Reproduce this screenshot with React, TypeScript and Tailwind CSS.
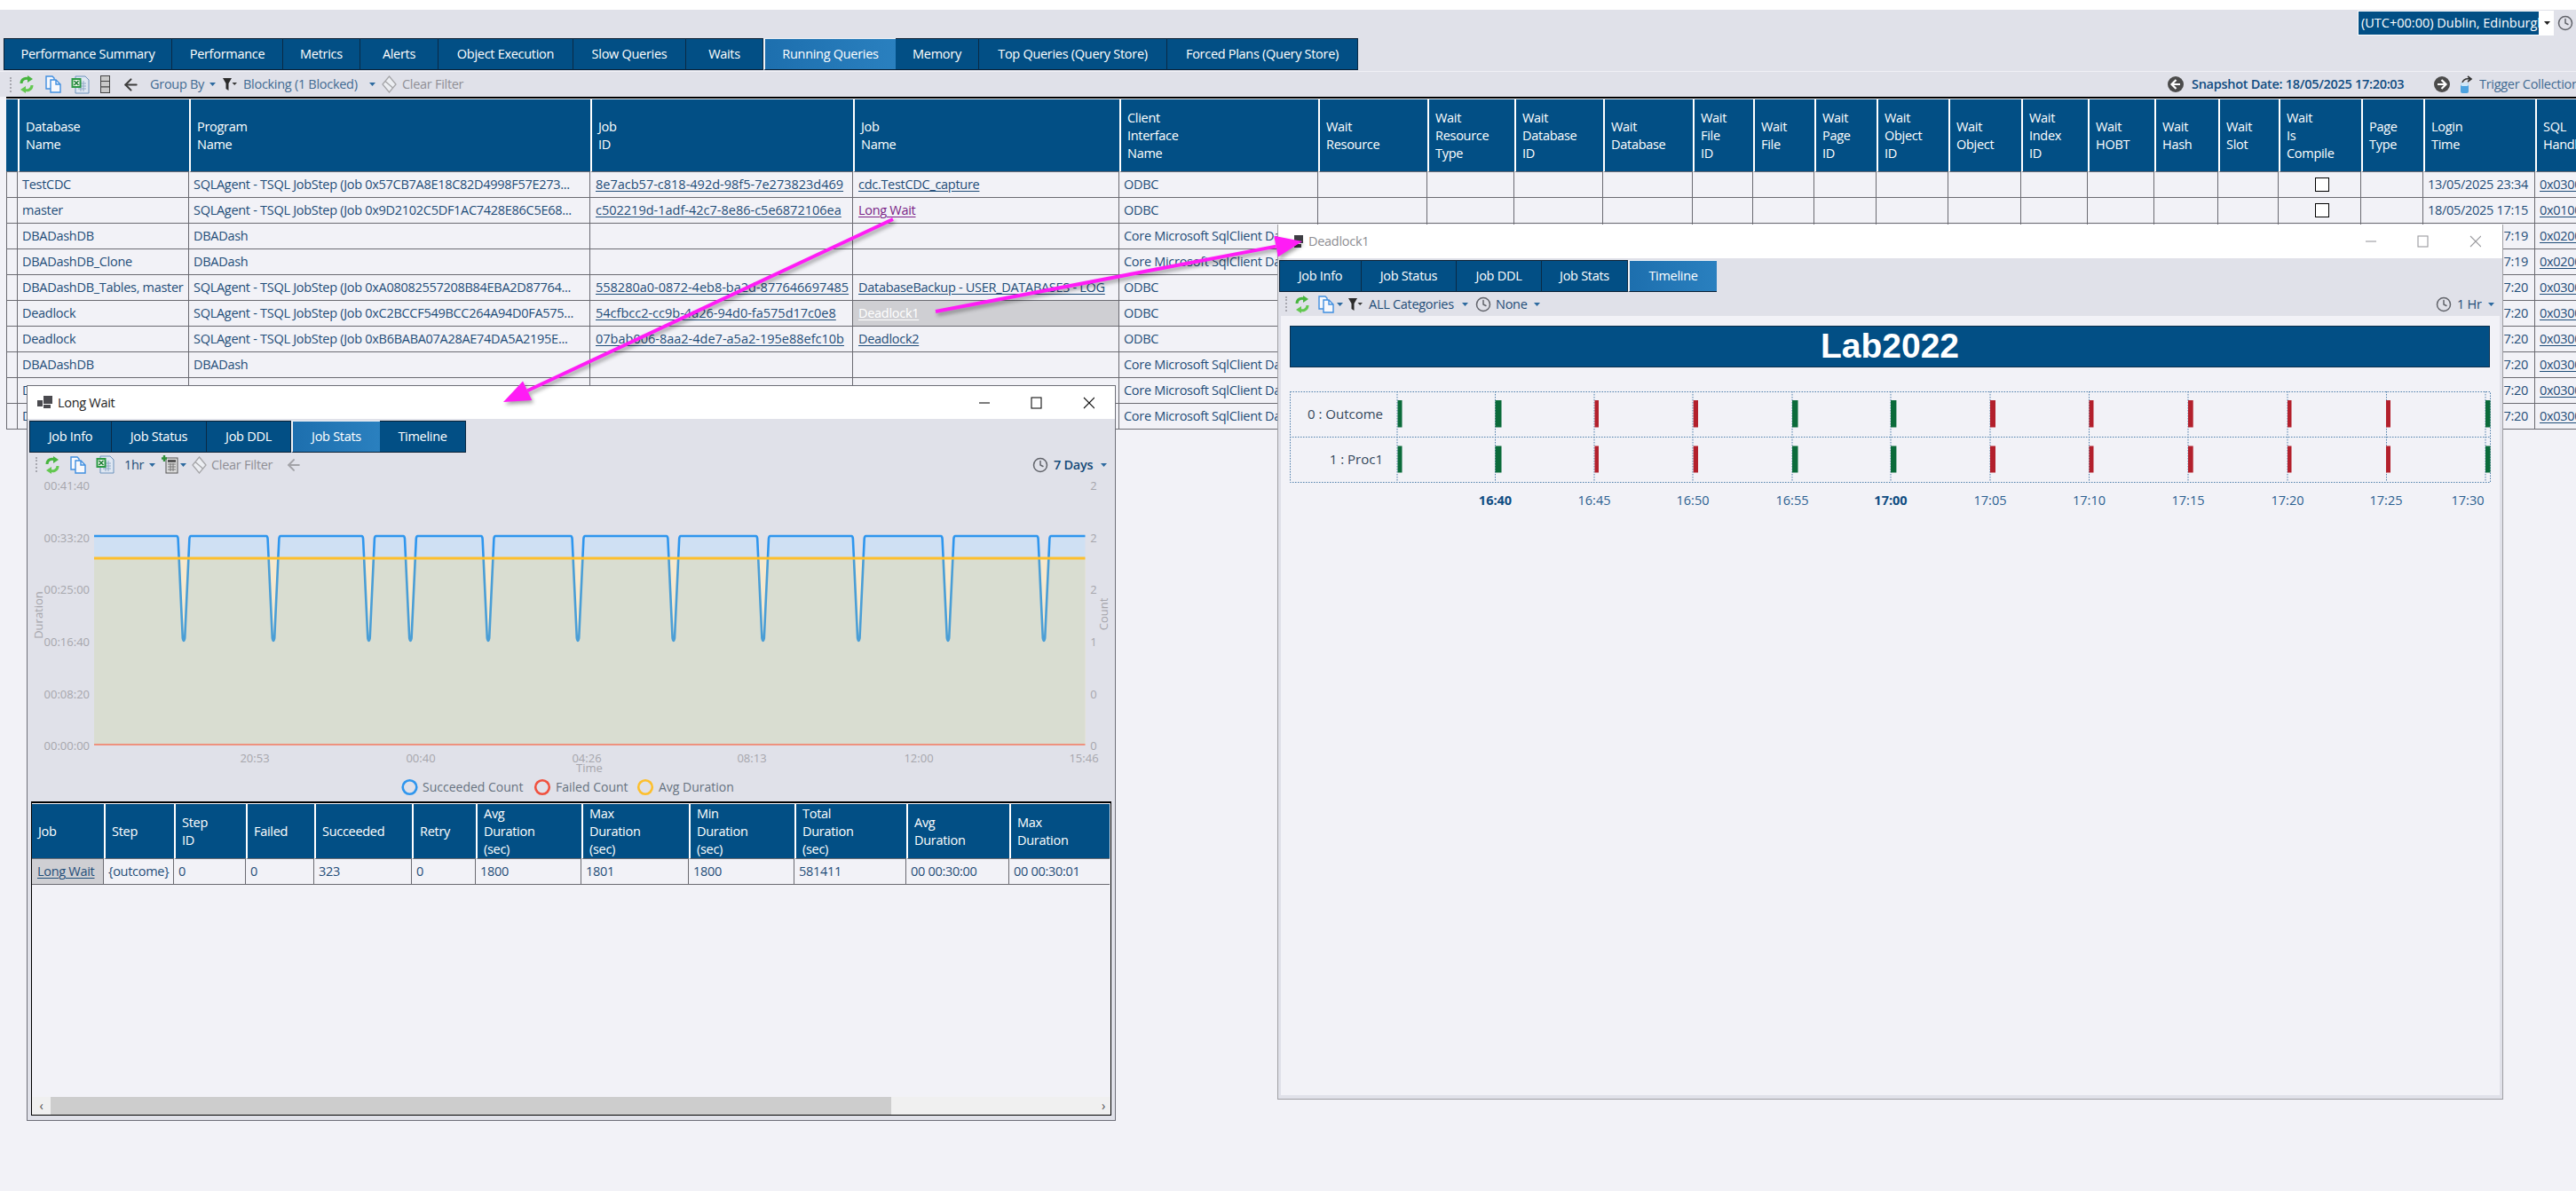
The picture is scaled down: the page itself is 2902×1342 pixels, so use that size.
import React from "react";
import { ArrowLeft, Clock } from "lucide-react";

const NAVY = "bg-[#024f85]";

// ---------- small drawn icons ----------
function Grip() {
  return <div className="h-[17px] w-[2px] border-l-2 border-dotted border-[#a8a8b0]" />;
}

function Refresh() {
  return (
    <svg width="16" height="20" viewBox="0 0 16 20" fill="none">
      <path d="M2 9 C2 4 7 2 11 4" stroke="#47b53f" strokeWidth="3" />
      <path d="M9 0 L15 4 L9 8 Z" fill="#47b53f" />
      <path d="M14 11 C14 16 9 18 5 16" stroke="#63c850" strokeWidth="3" />
      <path d="M7 12 L1 16 L7 20 Z" fill="#63c850" />
    </svg>
  );
}

function CopyIcon() {
  return (
    <svg width="18" height="20" viewBox="0 0 18 20" fill="#f7f8fc" stroke="#3f8ee0" strokeWidth="1.4">
      <path d="M1 1 H8 L10 3 V15 H1 Z" />
      <path d="M6 5 H12 L17 10 V19 H6 Z" />
      <path d="M12 5 V10 H17" fill="none" />
    </svg>
  );
}

function ExcelIcon() {
  return (
    <svg width="21" height="21" viewBox="0 0 21 21">
      <path d="M5 1 H16 L20 5 V20 H5 Z" fill="#dfe7f2" stroke="#6d93bd" />
      <path d="M8 9 H17 M8 12 H17 M8 15 H17 M11 6 V18 M14 6 V18" stroke="#8fa9c6" />
      <rect x="0.5" y="3" width="11" height="11" fill="#2d9a46" />
      <rect x="2.5" y="5" width="7" height="7" fill="#eaf6ea" />
      <path d="M3.5 6 L8.5 11 M8.5 6 L3.5 11" stroke="#1c7c34" strokeWidth="1.5" />
    </svg>
  );
}

function ColumnsIcon() {
  return (
    <svg width="11" height="20" viewBox="0 0 11 20" fill="#c9c9c9" stroke="#444">
      <rect x="0.5" y="0.5" width="10" height="6" />
      <rect x="0.5" y="6.5" width="10" height="6.5" />
      <rect x="0.5" y="13" width="10" height="6.5" />
    </svg>
  );
}

function Funnel() {
  return (
    <svg width="16" height="16" viewBox="0 0 16 16">
      <path d="M0 1 H10 L6.5 7 V15 L3.5 13 V7 Z" fill="#2b2b2b" />
      <path d="M10.5 6 H16 L13.2 9 Z" fill="#3a3a3a" />
    </svg>
  );
}

function Eraser() {
  return (
    <svg width="17" height="20" viewBox="0 0 17 20" fill="#eceef2" stroke="#a5a5a8" strokeWidth="1.3">
      <path d="M8.5 1 L16 10 L8.5 19 L1 10 Z" />
      <path d="M4 6.5 L12.5 14" fill="none" />
    </svg>
  );
}

function Calc() {
  return (
    <svg width="19" height="21" viewBox="0 0 19 21">
      <rect x="5" y="3" width="13" height="17" fill="#dcdcdc" stroke="#555" />
      <rect x="7" y="5" width="9" height="3" fill="#555" />
      <path d="M7 10 H16 M7 13 H16 M7 16 H16 M10 9 V18 M13 9 V18" stroke="#777" />
      <path d="M3 0 V7 M0 3.5 H6" stroke="#2f8f3a" strokeWidth="2.4" />
    </svg>
  );
}

function Caret({ dark }: { dark?: boolean }) {
  return (
    <svg width="7" height="4" viewBox="0 0 7 4">
      <path d="M0 0 H7 L3.5 4 Z" fill={dark ? "#222" : "#2d6aa0"} />
    </svg>
  );
}

function Round({ dir }: { dir: "l" | "r" }) {
  return (
    <svg width="18" height="18" viewBox="0 0 18 18">
      <circle cx="9" cy="9" r="9" fill="#4b4b4b" />
      <path
        d={dir === "l" ? "M9.5 4 L4.5 9 L9.5 14 M5 9 H14" : "M8.5 4 L13.5 9 L8.5 14 M13 9 H4"}
        stroke="#fff"
        strokeWidth="2.2"
        fill="none"
      />
    </svg>
  );
}

function TriggerIcon() {
  return (
    <svg width="17" height="21" viewBox="0 0 17 21">
      <path d="M11 1 L15 4 L11 7 M14 4 C9 3 6 5 5 8" stroke="#333" strokeWidth="1.6" fill="none" />
      <rect x="3" y="8" width="9" height="12" rx="2" fill="#4da3e0" />
      <rect x="3" y="8" width="9" height="4" rx="2" fill="#cfe6f7" />
    </svg>
  );
}

function WinIcon({ grey }: { grey?: boolean }) {
  const c = grey ? "#3d3d42" : "#4a4a4f";
  return (
    <svg width="17" height="15" viewBox="0 0 17 15" fill={c}>
      <rect x="7" y="0" width="10" height="9" />
      <rect x="0" y="5" width="6" height="7" />
      <rect x="7" y="10" width="8" height="4" />
    </svg>
  );
}

function WinControls({ grey }: { grey?: boolean }) {
  const c = grey ? "#9a9a9e" : "#111";
  return (
    <svg width="130" height="16" viewBox="0 0 130 16" fill="none" stroke={c} strokeWidth="1.1">
      <path d="M0 8 H12" />
      <rect x="59" y="2" width="11" height="12" />
      <path d="M118 2 L130 14 M130 2 L118 14" />
    </svg>
  );
}

// ---------- tabs ----------
type Tab = { label: string; w: string; gap?: boolean; active?: boolean };

function TabStrip({ tabs }: { tabs: Tab[] }) {
  return (
    <div className="flex h-[36px] items-stretch text-white">
      {tabs.map((t, i) => (
        <div
          key={t.label}
          className={`flex items-center justify-center whitespace-nowrap border-y border-[#0a1f33] ${t.w} ${
            t.active
              ? "bg-gradient-to-r from-[#1d6fae] to-[#2a80bf] border-t-[#e8edf3] border-l-2 border-l-[#f0f2f6]"
              : `${NAVY} ${i === 0 ? "border-l border-l-[#0a1f33]" : ""} border-r border-r-[#0a2a45]`
          }`}
        >
          {t.label}
        </div>
      ))}
    </div>
  );
}

// ---------- data grid bits ----------
function Head({ lines, first }: { lines: string[]; first?: boolean }) {
  return (
    <div
      className={`flex min-w-0 flex-col justify-center border-b border-[#6b6b72] pl-[7px] leading-[20px] text-white ${NAVY} ${
        first ? "" : "border-l-2 border-l-white"
      }`}
    >
      {lines.map((l) => (
        <span key={l} className="whitespace-nowrap">
          {l}
        </span>
      ))}
    </div>
  );
}

function Cell({ children, className = "" }: { children?: React.ReactNode; className?: string }) {
  return (
    <div
      className={`flex h-[29px] min-w-0 items-center overflow-hidden whitespace-nowrap border-b border-r border-[#6b6b72] pl-[5px] text-[#1f4d78] ${className}`}
    >
      {children}
    </div>
  );
}

function Link({ children, className = "" }: { children: React.ReactNode; className?: string }) {
  return <span className={`underline underline-offset-2 ${className}`}>{children}</span>;
}

const MAIN_COLS =
  "grid-cols-[13px_193px_452px_296px_300px_224px_123px_98px_100px_101px_68px_69px_70px_81px_82px_75px_75px_72px_68px_93px_70px_126px_144px]";

const MAIN_HEAD: string[][] = [
  [],
  ["Database", "Name"],
  ["Program", "Name"],
  ["Job", "ID"],
  ["Job", "Name"],
  ["Client", "Interface", "Name"],
  ["Wait", "Resource"],
  ["Wait", "Resource", "Type"],
  ["Wait", "Database", "ID"],
  ["Wait", "Database"],
  ["Wait", "File", "ID"],
  ["Wait", "File"],
  ["Wait", "Page", "ID"],
  ["Wait", "Object", "ID"],
  ["Wait", "Object"],
  ["Wait", "Index", "ID"],
  ["Wait", "HOBT"],
  ["Wait", "Hash"],
  ["Wait", "Slot"],
  ["Wait", "Is", "Compile"],
  ["Page", "Type"],
  ["Login", "Time"],
  ["SQL", "Handle"],
];

const CORE = "Core Microsoft SqlClient Data Provider";
const AGENT = "SQLAgent - TSQL JobStep (Job ";

const MAIN_ROWS = [
  { db: "TestCDC", prog: AGENT + "0x57CB7A8E18C82D4998F57E273...", id: "8e7acb57-c818-492d-98f5-7e273823d469", job: "cdc.TestCDC_capture", client: "ODBC", login: "13/05/2025 23:34", sql: "0x030000" },
  { db: "master", prog: AGENT + "0x9D2102C5DF1AC7428E86C5E68...", id: "c502219d-1adf-42c7-8e86-c5e6872106ea", job: "Long Wait", client: "ODBC", login: "18/05/2025 17:15", sql: "0x010000" },
  { db: "DBADashDB", prog: "DBADash", id: "", job: "", client: CORE, login: "18/05/2025 17:19", sql: "0x020000" },
  { db: "DBADashDB_Clone", prog: "DBADash", id: "", job: "", client: CORE, login: "18/05/2025 17:19", sql: "0x020000" },
  { db: "DBADashDB_Tables, master", prog: AGENT + "0xA08082557208B84EBA2D87764...", id: "558280a0-0872-4eb8-ba2d-877646697485", job: "DatabaseBackup - USER_DATABASES - LOG", client: "ODBC", login: "18/05/2025 17:20", sql: "0x030000" },
  { db: "Deadlock", prog: AGENT + "0xC2BCCF549BCC264A94D0FA575...", id: "54cfbcc2-cc9b-4a26-94d0-fa575d17c0e8", job: "Deadlock1", client: "ODBC", login: "18/05/2025 17:20", sql: "0x030000" },
  { db: "Deadlock", prog: AGENT + "0xB6BABA07A28AE74DA5A2195E...", id: "07bab006-8aa2-4de7-a5a2-195e88efc10b", job: "Deadlock2", client: "ODBC", login: "18/05/2025 17:20", sql: "0x030000" },
  { db: "DBADashDB", prog: "DBADash", id: "", job: "", client: CORE, login: "18/05/2025 17:20", sql: "0x030000" },
  { db: "DBADashDB", prog: "DBADash", id: "", job: "", client: CORE, login: "18/05/2025 17:20", sql: "0x030000" },
  { db: "DBADashDB", prog: "DBADash", id: "", job: "", client: CORE, login: "18/05/2025 17:20", sql: "0x030000" },
];

function MainGrid() {
  return (
    <div className={`ml-[7px] grid h-[372px] w-[3000px] ${MAIN_COLS} grid-rows-[82px_repeat(10,29px)]`}>
      {MAIN_HEAD.map((lines, i) => (
        <Head key={i} lines={lines} first={i === 0} />
      ))}
      {MAIN_ROWS.map((r, idx) => (
        <React.Fragment key={idx}>
          <Cell className="border-l border-l-[#6b6b72]" />
          <Cell>{r.db}</Cell>
          <Cell>{r.prog}</Cell>
          <Cell className="pl-[6px] tracking-normal">{r.id && <Link>{r.id}</Link>}</Cell>
          <Cell
            className={`pl-[6px] ${r.job === "Deadlock1" ? "bg-[#cfcfd3]" : ""}`}
          >
            {r.job && (
              <Link
                className={
                  r.job === "Long Wait" ? "text-[#7a1f86]" : r.job === "Deadlock1" ? "text-white" : ""
                }
              >
                {r.job}
              </Link>
            )}
          </Cell>
          <Cell>{r.client}</Cell>
          {Array.from({ length: 13 }).map((_, i) => (
            <Cell key={i} />
          ))}
          <Cell className="justify-center pl-0">
            <div className="h-[16px] w-[16px] border-[1.5px] border-black bg-white" />
          </Cell>
          <Cell />
          <Cell className="pl-[4px]">{r.login}</Cell>
          <Cell className="pl-[5px]">
            <Link>{r.sql}</Link>
          </Cell>
        </React.Fragment>
      ))}
    </div>
  );
}

// ---------- job stats chart ----------
const DIPS = [207, 308, 415.5, 462.4, 550, 651, 758.8, 859.6, 967.3, 1068, 1176];
const PLOT_L = 106;
const PLOT_R = 1222.5;

function durationPath() {
  let d = `M${PLOT_L} 604`;
  DIPS.forEach((x) => {
    d += ` L${x - 8} 604 Q${x - 6.8} 604 ${x - 6.4} 607 L${x - 1.2} 719 Q${x} 725 ${x + 1.2} 719 L${x + 6.4} 607 Q${x + 6.8} 604 ${x + 8} 604`;
  });
  return d + ` L${PLOT_R} 604`;
}

function StatsChart() {
  const line = durationPath();
  const area = `${line} L${PLOT_R} 839 L${PLOT_L} 839 Z`;
  const yLabels: [string, string, number][] = [
    ["00:41:40", "2", 547],
    ["00:33:20", "2", 606],
    ["00:25:00", "2", 664],
    ["00:16:40", "1", 723],
    ["00:08:20", "0", 782],
    ["00:00:00", "0", 840],
  ];
  const xLabels: [string, number][] = [
    ["20:53", 287],
    ["00:40", 474],
    ["04:26", 661],
    ["08:13", 847],
    ["12:00", 1035],
    ["15:46", 1221],
  ];
  return (
    <svg width="1216" height="366" viewBox="35 537 1216 366" className="shrink-0 tracking-normal">
      <defs>
        <clipPath id="above">
          <rect x="100" y="590" width="1130" height="39" />
        </clipPath>
        <clipPath id="below">
          <rect x="100" y="629" width="1130" height="211" />
        </clipPath>
      </defs>
      <rect x={PLOT_L} y="629" width={PLOT_R - PLOT_L} height="210" fill="#f6e9cf" />
      <path d={area} fill="#cfe0f3" clipPath="url(#above)" />
      <path d={area} fill="#d9ddd1" clipPath="url(#below)" />
      <path d={line} fill="none" stroke="#2f96ee" strokeWidth="2.6" clipPath="url(#above)" />
      <path d={line} fill="none" stroke="#4a9ed6" strokeWidth="2.6" clipPath="url(#below)" />
      <path d={`M${PLOT_L} 629 H${PLOT_R}`} stroke="#fdbf2d" strokeWidth="3" />
      <path d={`M${PLOT_L} 839 H${PLOT_R}`} stroke="#f4775f" strokeWidth="1.4" />
      <g fill="#a6a6ac" fontSize="13">
        {yLabels.map(([l, r, y]) => (
          <React.Fragment key={l}>
            <text x="101" y={y + 5} textAnchor="end">
              {l}
            </text>
            <text x="1232" y={y + 5} textAnchor="middle">
              {r}
            </text>
          </React.Fragment>
        ))}
        {xLabels.map(([l, x]) => (
          <text key={l} x={x} y="859" textAnchor="middle">
            {l}
          </text>
        ))}
        <text x="664" y="870" textAnchor="middle">
          Time
        </text>
        <text transform="rotate(-90 48 693)" x="48" y="693" textAnchor="middle">
          Duration
        </text>
        <text transform="rotate(-90 1248 692)" x="1248" y="692" textAnchor="middle">
          Count
        </text>
      </g>
      <g fill="none" strokeWidth="2.6">
        <circle cx="461.5" cy="887" r="7.8" stroke="#2f96ee" />
        <circle cx="611" cy="887" r="7.8" stroke="#f0513f" />
        <circle cx="727" cy="887" r="7.8" stroke="#fdbf2d" />
      </g>
      <g fill="#66727f" fontSize="14">
        <text x="476" y="892">Succeeded Count</text>
        <text x="626" y="892">Failed Count</text>
        <text x="742" y="892">Avg Duration</text>
      </g>
    </svg>
  );
}

const STATS_COLS = "grid-cols-[81px_79px_81px_77px_110px_72px_119px_121px_119px_126px_116px_113px]";
const STATS_HEAD: string[][] = [
  ["Job"],
  ["Step"],
  ["Step", "ID"],
  ["Failed"],
  ["Succeeded"],
  ["Retry"],
  ["Avg", "Duration", "(sec)"],
  ["Max", "Duration", "(sec)"],
  ["Min", "Duration", "(sec)"],
  ["Total", "Duration", "(sec)"],
  ["Avg", "Duration"],
  ["Max", "Duration"],
];
const STATS_ROW = ["{outcome}", "0", "0", "323", "0", "1800", "1801", "1800", "581411", "00 00:30:00", "00 00:30:01"];

function LongWaitWindow() {
  return (
    <div className="absolute left-[30px] top-[434px] z-10 flex h-[829px] w-[1227px] flex-col border border-[#6f7079] bg-[#e0e1e9]">
      <div className="flex h-[37px] shrink-0 items-center bg-white pl-[11px] text-[#222]">
        <WinIcon />
        <span className="ml-[6px] w-[80px] whitespace-nowrap">Long Wait</span>
        <div className="ml-auto mr-[23px]">
          <WinControls />
        </div>
      </div>
      <div className="ml-[2px] mt-[2px] shrink-0">
        <TabStrip
          tabs={[
            { label: "Job Info", w: "w-[93px]" },
            { label: "Job Status", w: "w-[107px]" },
            { label: "Job DDL", w: "w-[95px]" },
            { label: "Job Stats", w: "w-[100px]", active: true },
            { label: "Timeline", w: "w-[97px]" },
          ]}
        />
      </div>
      <div className="flex h-[27px] shrink-0 items-center text-[#1f4d78]">
        <div className="ml-[9px]">
          <Grip />
        </div>
        <div className="ml-[9px]">
          <Refresh />
        </div>
        <div className="ml-[12px]">
          <CopyIcon />
        </div>
        <div className="ml-[11px]">
          <ExcelIcon />
        </div>
        <span className="ml-[11px] w-[22px]">1hr</span>
        <div className="ml-[6px]">
          <Caret />
        </div>
        <div className="ml-[7px]">
          <Calc />
        </div>
        <div className="ml-[2px]">
          <Caret />
        </div>
        <div className="ml-[6px]">
          <Eraser />
        </div>
        <span className="ml-[5px] w-[72px] whitespace-nowrap text-[#8f8f96]">Clear Filter</span>
        <div className="ml-[11px] text-[#a3a3a8]">
          <ArrowLeft size={20} strokeWidth={2.4} />
        </div>
        <div className="ml-auto text-[#62646b]">
          <Clock size={18} strokeWidth={2} />
        </div>
        <span className="ml-[6px] w-[48px] whitespace-nowrap font-semibold text-[#144a78]">7 Days</span>
        <div className="ml-[5px] mr-[9px]">
          <Caret />
        </div>
      </div>
      <div className="flex min-h-0 flex-1 flex-col pb-[5px] pl-[4px] pr-[4px]">
        <StatsChart />
        <div className="flex min-h-0 flex-1 flex-col border-x border-b border-t-2 border-black bg-[#f2f2f7] pt-[1px]">
          <div className={`grid ${STATS_COLS} grid-rows-[62px_29px]`}>
            {STATS_HEAD.map((lines, i) => (
              <Head key={i} lines={lines} first={i === 0} />
            ))}
            <Cell className="bg-[#cfcfd3] pl-[6px]">
              <Link>Long Wait</Link>
            </Cell>
            {STATS_ROW.map((v, i) => (
              <Cell key={i} className={i === STATS_ROW.length - 1 ? "border-r-0" : ""}>
                {v}
              </Cell>
            ))}
          </div>
          <div className="mt-auto flex h-[20px] items-center bg-[#f0f0f0]">
            <div className="flex h-full w-[21px] items-center justify-center text-[#555]">‹</div>
            <div className="h-full w-[947px] bg-[#cdcdcd]" />
            <div className="ml-auto mr-[6px] text-[#555]">›</div>
          </div>
        </div>
      </div>
    </div>
  );
}

// ---------- deadlock timeline ----------
const GRID_X = [1574, 1684.5, 1796, 1907, 2019, 2130, 2242, 2353.5, 2465, 2577, 2688.5, 2800];
const BARS: [number, number, string][] = [
  [1574.5, 5, "#0b6b3a"],
  [1684.5, 7, "#0b6b3a"],
  [1796.5, 4.5, "#b3202c"],
  [1907.7, 5.3, "#b3202c"],
  [2019, 6.5, "#0b6b3a"],
  [2130, 6.4, "#0b6b3a"],
  [2242, 6, "#b3202c"],
  [2353.5, 5, "#b3202c"],
  [2465, 5.7, "#b3202c"],
  [2577, 4.5, "#b3202c"],
  [2688, 5, "#b3202c"],
  [2800, 5.5, "#0b6b3a"],
];
const TIME_LABELS: [string, number, boolean][] = [
  ["16:40", 1684.5, true],
  ["16:45", 1796, false],
  ["16:50", 1907, false],
  ["16:55", 2019, false],
  ["17:00", 2130, true],
  ["17:05", 2242, false],
  ["17:10", 2353.5, false],
  ["17:15", 2465, false],
  ["17:20", 2577, false],
  ["17:25", 2688, false],
  ["17:30", 2780, false],
];

function Timeline() {
  return (
    <svg width="1354" height="140" viewBox="1453 436 1354 140" className="mt-[22px] shrink-0 tracking-normal">
      <g stroke="#4f7fab" strokeWidth="1" strokeDasharray="1.5 1.5" fill="none">
        <rect x="1453.5" y="441.5" width="1352" height="102" />
        <path d="M1453 492.5 H2806" />
        {GRID_X.map((x) => (
          <path key={x} d={`M${x} 441 V543`} />
        ))}
      </g>
      {BARS.map(([x, w, c]) => (
        <React.Fragment key={x}>
          <rect x={x} y="451" width={w} height="30.5" fill={c} />
          <rect x={x} y="502.5" width={w} height="30" fill={c} />
        </React.Fragment>
      ))}
      <text x="1558" y="472" textAnchor="end" fill="#33475b" fontSize="15">
        0 : Outcome
      </text>
      <text x="1558" y="523" textAnchor="end" fill="#33475b" fontSize="15">
        1 : Proc1
      </text>
      {TIME_LABELS.map(([l, x, bold]) => (
        <text
          key={l}
          x={x}
          y="569"
          textAnchor="middle"
          fontSize="14.5"
          fontWeight={bold ? 700 : 400}
          fill={bold ? "#0f4c81" : "#2a5f90"}
        >
          {l}
        </text>
      ))}
    </svg>
  );
}

function DeadlockWindow() {
  return (
    <div className="absolute left-[1439px] top-[253px] z-10 flex h-[986px] w-[1381px] flex-col border-x border-b border-[#a0a0a4] bg-[#e0e1e9]">
      <div className="flex h-[38px] shrink-0 items-center bg-white pl-[11px] text-[#8d8d92]">
        <WinIcon grey />
        <span className="ml-[6px]">Deadlock1</span>
        <div className="ml-auto mr-[24px]">
          <WinControls grey />
        </div>
      </div>
      <div className="ml-[1px] mt-[2px] shrink-0">
        <TabStrip
          tabs={[
            { label: "Job Info", w: "w-[93px]" },
            { label: "Job Status", w: "w-[107px]" },
            { label: "Job DDL", w: "w-[96px]" },
            { label: "Job Stats", w: "w-[97px]" },
            { label: "Timeline", w: "w-[100px]", active: true },
          ]}
        />
      </div>
      <div className="flex h-[27px] shrink-0 items-center text-[#1f4d78]">
        <div className="ml-[8px]">
          <Grip />
        </div>
        <div className="ml-[9px]">
          <Refresh />
        </div>
        <div className="ml-[10px]">
          <CopyIcon />
        </div>
        <div className="ml-[3px]">
          <Caret />
        </div>
        <div className="ml-[6px]">
          <Funnel />
        </div>
        <span className="ml-[7px] w-[98px] whitespace-nowrap">ALL Categories</span>
        <div className="ml-[7px]">
          <Caret />
        </div>
        <div className="ml-[8px] text-[#62646b]">
          <Clock size={18} strokeWidth={2} />
        </div>
        <span className="ml-[5px] w-[36px]">None</span>
        <div className="ml-[7px]">
          <Caret />
        </div>
        <div className="ml-auto text-[#62646b]">
          <Clock size={18} strokeWidth={2} />
        </div>
        <span className="ml-[6px] w-[28px] whitespace-nowrap">1 Hr</span>
        <div className="ml-[7px] mr-[9px]">
          <Caret />
        </div>
      </div>
      <div className="ml-[3px] mr-[3px] flex flex-1 flex-col bg-[#f2f2f7] pl-[10px] pb-[4px]">
        <div
          className={`mt-[11px] flex h-[47px] w-[1352px] shrink-0 items-center justify-center border border-[#0b2f4d] font-['Liberation_Sans',sans-serif] text-[39px] font-bold tracking-normal text-white ${NAVY}`}
        >
          Lab2022
        </div>
        <Timeline />
      </div>
      <div className="h-[4px] shrink-0" />
    </div>
  );
}

// ---------- magenta annotation arrows ----------
function arrowPoints(x1: number, y1: number, x2: number, y2: number) {
  const len = Math.hypot(x2 - x1, y2 - y1);
  const ux = (x2 - x1) / len;
  const uy = (y2 - y1) / len;
  const bx = x2 - ux * 30;
  const by = y2 - uy * 30;
  const nx = -uy;
  const ny = ux;
  return {
    line: `M${x1} ${y1} L${bx} ${by}`,
    head: `${x2},${y2} ${bx + nx * 12},${by + ny * 12} ${bx - nx * 12},${by - ny * 12}`,
  };
}

function Arrows() {
  const a = arrowPoints(1006, 247, 567, 453);
  const b = arrowPoints(1054, 351, 1467, 272);
  return (
    <svg
      width="2902"
      height="1342"
      viewBox="0 0 2902 1342"
      className="pointer-events-none absolute left-0 top-0 z-20 [filter:drop-shadow(2px_3px_2px_rgba(0,0,0,0.35))]"
    >
      {[a, b].map((p) => (
        <React.Fragment key={p.head}>
          <path d={p.line} stroke="#ff1cf5" strokeWidth="4" />
          <polygon points={p.head} fill="#ff1cf5" />
        </React.Fragment>
      ))}
    </svg>
  );
}

export default function App() {
  return (
    <div className="relative h-[1342px] w-[2902px] overflow-hidden bg-[#f2f2f7] font-['Open_Sans',sans-serif] text-[14.5px] tracking-[-0.02em]">
      <div className="h-[11px] bg-white" />

      {/* time zone bar */}
      <div className="flex h-[32px] items-start justify-end bg-[#e0e1e9] pr-[3px]">
        <div className="mt-[1px] flex h-[28px] w-[221px] items-center bg-white pl-[1px]">
          <div className="flex h-[26px] w-[203px] items-center overflow-hidden whitespace-nowrap bg-[#024f85] pl-[3px] tracking-normal text-white">
            (UTC+00:00) Dublin, Edinburgh, Lisbon, London
          </div>
          <div className="ml-[6px]">
            <Caret dark />
          </div>
        </div>
        <div className="ml-[4px] mt-[6px] text-[#62646b]">
          <Clock size={18} strokeWidth={2} />
        </div>
      </div>

      {/* main tabs */}
      <div className="h-[37px] bg-[#e0e1e9] pl-[4px]">
        <TabStrip
          tabs={[
            { label: "Performance Summary", w: "w-[190px]" },
            { label: "Performance", w: "w-[125px]" },
            { label: "Metrics", w: "w-[87px]" },
            { label: "Alerts", w: "w-[88px]" },
            { label: "Object Execution", w: "w-[152px]" },
            { label: "Slow Queries", w: "w-[127px]" },
            { label: "Waits", w: "w-[87px]" },
            { label: "Running Queries", w: "w-[149px]", active: true },
            { label: "Memory", w: "w-[94px]" },
            { label: "Top Queries (Query Store)", w: "w-[212px]" },
            { label: "Forced Plans (Query Store)", w: "w-[215px]" },
          ]}
        />
      </div>

      {/* main toolbar */}
      <div className="flex h-[29px] items-center border-t border-[#f0f0f5] bg-[#e0e1e9] text-[#3f6a92]">
        <div className="ml-[11px]">
          <Grip />
        </div>
        <div className="ml-[9px]">
          <Refresh />
        </div>
        <div className="ml-[13px]">
          <CopyIcon />
        </div>
        <div className="ml-[11px]">
          <ExcelIcon />
        </div>
        <div className="ml-[12px]">
          <ColumnsIcon />
        </div>
        <div className="ml-[13px] text-[#3d3d3d]">
          <ArrowLeft size={21} strokeWidth={2.4} />
        </div>
        <span className="ml-[11px] w-[61px] whitespace-nowrap">Group By</span>
        <div className="ml-[6px]">
          <Caret />
        </div>
        <div className="ml-[8px]">
          <Funnel />
        </div>
        <span className="ml-[7px] w-[136px] whitespace-nowrap">Blocking (1 Blocked)</span>
        <div className="ml-[6px]">
          <Caret />
        </div>
        <div className="ml-[7px]">
          <Eraser />
        </div>
        <span className="ml-[6px] w-[72px] whitespace-nowrap text-[#8f8f96]">Clear Filter</span>
        <div className="ml-auto flex items-center">
          <Round dir="l" />
          <span className="ml-[9px] w-[263px] whitespace-nowrap font-semibold text-[#0f4c81]">
            Snapshot Date: 18/05/2025 17:20:03
          </span>
          <div className="ml-[10px]">
            <Round dir="r" />
          </div>
          <div className="ml-[9px]">
            <TriggerIcon />
          </div>
          <span className="ml-[7px] w-[109px] overflow-hidden whitespace-nowrap">Trigger Collection</span>
        </div>
      </div>

      <div className="ml-[7px] h-[3px] border-t-2 border-black" />
      <MainGrid />

      <LongWaitWindow />
      <DeadlockWindow />
      <Arrows />
    </div>
  );
}
